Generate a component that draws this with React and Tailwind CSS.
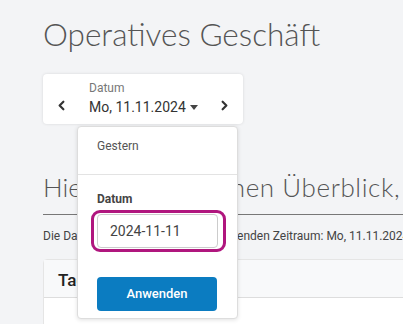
import React from "react";
import { ChevronLeft, ChevronRight } from "lucide-react";

function DatePicker() {
  return (
    <div className="relative w-[200px]">
      <div className="flex items-center h-[50px] bg-white rounded shadow-[0_0_3px_rgba(0,0,0,0.12)] pl-[11px] pr-[11px] font-['Roboto',sans-serif]">
        <ChevronLeft className="w-[15px] h-[15px] text-[#333] mt-[13px]" strokeWidth={3.5} />
        <div className="flex flex-col ml-[20px] flex-1">
          <span className="text-[12px] leading-[14px] text-[#777]">Datum</span>
          <span className="text-[14px] leading-[20px] text-[#333] mt-[2px] flex items-center">
            Mo, 11.11.2024
            <svg className="ml-[4px] w-[8px] h-[5px]" viewBox="0 0 8 5"><path d="M0 0h8L4 5z" fill="#444" /></svg>
          </span>
        </div>
        <ChevronRight className="w-[15px] h-[15px] text-[#333] mt-[13px]" strokeWidth={3.5} />
      </div>

      <div className="absolute left-[34px] top-[52px] w-[161px] bg-white border border-[#ddd] rounded shadow-[0_1px_4px_rgba(0,0,0,0.12)] font-['Roboto',sans-serif] z-10">
        <div className="h-[48px] pl-[19px] pt-[10px] text-[12px] text-[#555] border-b border-[#e3e3e3]">Gestern</div>
        <div className="px-[19px] pt-[17px] pb-[7px]">
          <div className="text-[12px] font-bold text-[#444] leading-[14px]">Datum</div>
          <div className="relative mt-[8px]">
            <div className="h-[34px] w-[121px] border border-[#ccc] rounded-sm flex items-center pl-[12px] text-[14px] text-[#444]">2024-11-11</div>
            <div className="absolute -left-[6px] -top-[4px] w-[135px] h-[42px] border-[3px] border-[#b0167e] rounded-[9px]"></div>
          </div>
          <button className="mt-[29px] w-[120px] h-[34px] bg-[#0b7cc1] rounded-sm text-white text-[13px] font-medium">Anwenden</button>
        </div>
      </div>
    </div>
  );
}

export default function App() {
  return (
    <div className="w-[403px] h-[324px] overflow-hidden bg-[#f3f4f6] pl-[43px]">
      <h1 className="pt-[15px] font-['Lato',sans-serif] font-light text-[31.5px] leading-[38px] text-[#555] whitespace-nowrap">Operatives Geschäft</h1>
      <div className="mt-[21px]">
        <DatePicker />
      </div>
      <h2 className="mt-[48px] font-['Lato',sans-serif] font-light text-[26px] leading-[30px] text-[#555] whitespace-nowrap">
        Hier sehen Sie ei<span className="tracking-[0.6px]">nen Überblick, was heute los ist</span>
      </h2>
      <div className="border-t border-[#777] mt-[12px] w-[400px]"></div>
      <p className="mt-[12px] text-[12px] text-[#444] font-['Roboto',sans-serif] whitespace-nowrap">Die Daten beziehen sich auf den folgenden Zeitraum: Mo, 11.11.2024</p>
      <div className="mt-[14px] w-[400px] bg-white rounded-sm border border-[#e5e5e5]">
        <div className="h-[38px] bg-[#f8f9fa] border-b border-[#ddd] pl-[14px] pt-[4px] flex items-center font-['Roboto',sans-serif] font-medium text-[17px] text-[#222]">Tagesübersicht</div>
        <div className="h-[40px]"></div>
      </div>
    </div>
  );
}
